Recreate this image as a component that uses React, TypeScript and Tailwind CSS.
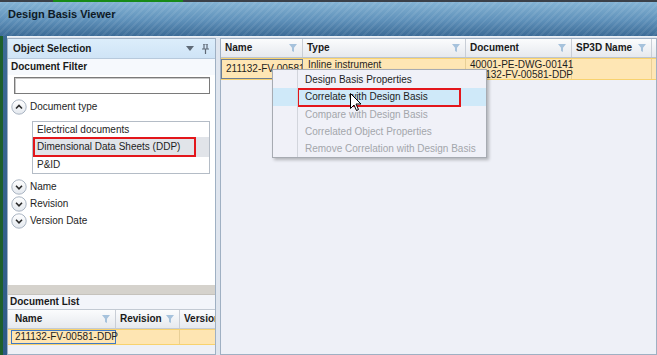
import React from "react";

const Funnel = () => (
  <svg width="8" height="8" viewBox="0 0 8 8" className="shrink-0">
    <path d="M0 0H8L5 3.8V8L3 7V3.8Z" fill="#a6c2dc" />
  </svg>
);

const CircleChevron = ({ up }: { up?: boolean }) => (
  <svg width="16" height="16" viewBox="0 0 16 16" className="shrink-0">
    <defs>
      <linearGradient id={up ? "cgu" : "cgd"} x1="0" y1="0" x2="0" y2="1">
        <stop offset="0" stopColor="#ffffff" />
        <stop offset="1" stopColor="#e3e8ee" />
      </linearGradient>
    </defs>
    <circle cx="8" cy="8" r="7.2" fill={`url(#${up ? "cgu" : "cgd"})`} stroke="#a9b4c2" strokeWidth="1" />
    {up ? (
      <path d="M5 9.5L8 6.5L11 9.5" stroke="#2a2a2a" strokeWidth="1.6" fill="none" />
    ) : (
      <path d="M5 6.8L8 9.8L11 6.8" stroke="#2a2a2a" strokeWidth="1.6" fill="none" />
    )}
  </svg>
);

const HeaderCell = ({ label, w, filter = true, last }: { label: string; w: string; filter?: boolean; last?: boolean }) => (
  <div className={`${w} h-full flex items-center justify-between pl-[4px] pr-[5px] ${last ? "" : "border-r border-[#c9ced6]"} overflow-hidden`}>
    <span className="font-bold text-[#1a1a1a] whitespace-nowrap">{label}</span>
    {filter && <Funnel />}
  </div>
);

export default function App() {
  return (
    <div className="w-[657px] h-[355px] overflow-hidden relative bg-[#2d3a48] font-['Liberation_Sans',Arial,sans-serif] text-[10px] text-[#1e1e1e] leading-none">
      {/* top strip */}
      <div className="h-[2px] flex">
        <div className="w-[53px] bg-[#3b4048]" />
        <div className="w-[130px] bg-[#178a17]" />
        <div className="flex-1 bg-[#3b4048]" />
      </div>
      {/* title bar */}
      <div className="h-[34px] flex items-start pt-[7px] pl-[8px] bg-[repeating-linear-gradient(135deg,rgba(255,255,255,0.07)_0px,rgba(255,255,255,0.07)_2px,transparent_2px,transparent_5px),linear-gradient(#84b3d4,#5e90b9_55%,#3c6b96)]">
        <span className="text-[11px] font-bold text-[#0e1a26]">Design Basis Viewer</span>
      </div>
      {/* body */}
      <div className="flex h-[319px]">
        <div className="w-[3px] bg-[#1d5f2c]" />
        <div className="w-[4px] bg-[linear-gradient(#3c6a95,#2d5a86)]" />
        <div className="flex-1 flex pt-[1px] bg-[#dfe5ee] gap-[4px] border-t border-[#eaf0f6]">
          {/* left panel */}
          <div className="w-[209px] flex flex-col border border-[#9fb0c3] bg-white">
            <div className="h-[20px] flex items-center justify-between pl-[5px] pr-[6px] bg-[linear-gradient(#dcedfb,#cfe4f6)] border-b border-[#b7c9dc]">
              <span className="font-bold text-[#1a1a1a]">Object Selection</span>
              <div className="flex items-center gap-[8px]">
                <svg width="8" height="6" viewBox="0 0 8 6"><path d="M0 0H8L4 5Z" fill="#5f6a77" /></svg>
                <svg width="7" height="10" viewBox="0 0 7 10">
                  <path d="M1 0H6M2 0V5M5 0V5M0 5H7M3.5 5V10" stroke="#5f6a77" strokeWidth="1.2" fill="none" />
                </svg>
              </div>
            </div>
            <div className="h-[226px] flex flex-col bg-white">
              <div className="h-[16px] flex items-center pl-[3px] bg-[#f6f9fd]">
                <span className="font-bold text-[#1a1a1a]">Document Filter</span>
              </div>
              <div className="mt-[2px] ml-[6px] mr-[5px] h-[17px] border border-[#7a7a7a] shadow-[inset_1px_1px_0_#c8c8c8] bg-white" />
              <div className="mt-[5px] h-[16px] flex items-center pl-[3px] gap-[3px]">
                <CircleChevron up />
                <span>Document type</span>
              </div>
              <div className="mt-[6px] ml-[24px] mr-[5px] border border-[#b4bcc6] bg-white flex flex-col">
                <div className="h-[15px] flex items-center pl-[4px]">Electrical documents</div>
                <div className="h-[20px] bg-[#e1e4e9] flex">
                  <div className="w-[163px] h-full border-2 border-[#e3161b] flex items-center pl-[2px]">Dimensional Data Sheets (DDP)</div>
                </div>
                <div className="h-[16px] flex items-center pl-[4px]">P&amp;ID</div>
              </div>
              <div className="mt-[4px] flex flex-col">
                {["Name", "Revision", "Version Date"].map((t) => (
                  <div key={t} className="h-[17px] flex items-center pl-[3px] gap-[3px]">
                    <CircleChevron />
                    <span>{t}</span>
                  </div>
                ))}
              </div>
            </div>
            <div className="h-[10px] bg-[#d5d2cc] border-b border-[#c5c2bc]" />
            <div className="h-[14px] flex items-center pl-[2px] bg-[#f3f5fa]">
              <span className="font-bold text-[#1a1a1a]">Document List</span>
            </div>
            <div className="h-[20px] flex bg-[linear-gradient(#fbfcfd,#e6e9ee)] border-y border-[#c3cad3] pl-[3px]">
              <HeaderCell label="Name" w="w-[105px]" />
              <HeaderCell label="Revision" w="w-[64px]" />
              <HeaderCell label="Version" w="flex-1" filter={false} last />
            </div>
            <div className="h-[16px] flex bg-[#fee5b2] border-y border-[#f8d26e] pl-[3px]">
              <div className="w-[105px] h-full border border-[#3f78c4] flex items-center pl-[3px] whitespace-nowrap">211132-FV-00581-DDP</div>
              <div className="w-[64px] border-r border-[#e8cf96]" />
              <div className="flex-1" />
            </div>
            <div className="flex-1 bg-[#eef0f6]" />
          </div>
          {/* right panel */}
          <div className="flex-1 flex flex-col border border-[#9fb0c3] bg-[#eef0f7]">
            <div className="h-[19px] flex bg-[linear-gradient(#fbfcfd,#e6e9ee)] border-b border-[#bcc4ce]">
              <HeaderCell label="Name" w="w-[82px]" />
              <HeaderCell label="Type" w="w-[163px]" />
              <HeaderCell label="Document" w="w-[106px]" />
              <HeaderCell label="SP3D Name" w="w-[80px]" />
              <div className="flex-1" />
            </div>
            <div className="h-[22px] flex bg-[#fee6b4] border-y border-[#f8d26e]">
              <div className="w-[82px] h-full border border-[#6d7f95] flex items-center pl-[4px] whitespace-nowrap overflow-hidden">211132-FV-00581</div>
              <div className="w-[163px] pl-[5px] pt-[1px] border-r border-[#e8cf96] leading-[10px]">Inline instrument</div>
              <div className="w-[106px] pl-[4px] pt-[1px] border-r border-[#e8cf96] leading-[10px] whitespace-nowrap">
                <div>40001-PE-DWG-00141</div>
                <div>211132-FV-00581-DDP</div>
              </div>
              <div className="w-[80px] border-r border-[#e8cf96]" />
              <div className="flex-1" />
            </div>
            <div className="flex-1" />
          </div>
        </div>
      </div>

      {/* context menu */}
      <div className="absolute left-[272px] top-[69px] w-[215px] h-[89px] bg-[#f0f1f8] border border-[#a7abb2] shadow-[2px_2px_3px_rgba(0,0,0,0.25)] flex">
        <div className="absolute left-[24px] top-0 bottom-0 w-px bg-[#d2d5dc]" />
        <div className="flex-1 flex flex-col pt-[1px]">
          <div className="h-[18px] flex items-center pl-[32px]">Design Basis Properties</div>
          <div className="h-[18px] flex items-center bg-[#cfe9f9] pl-[24px]">
            <div className="w-[164px] h-[19px] border-2 border-[#e3161b] flex items-center pl-[6px]">Correlate with Design Basis</div>
          </div>
          <div className="h-[18px] flex items-center pl-[32px] text-[#a3a6ab]">Compare with Design Basis</div>
          <div className="h-[18px] flex items-center pl-[32px] text-[#a3a6ab]">Correlated Object Properties</div>
          <div className="h-[18px] flex items-center pl-[32px] text-[#a3a6ab]">Remove Correlation with Design Basis</div>
        </div>
      </div>

      {/* cursor */}
      <svg className="absolute left-[350px] top-[93px]" width="12" height="19" viewBox="0 0 12 19">
        <path d="M0.5 0.5V15.5L4 12L6.5 17.5L8.5 16.5L6 11H11Z" fill="#ffffff" stroke="#000000" strokeWidth="1" strokeLinejoin="round" />
      </svg>
    </div>
  );
}
